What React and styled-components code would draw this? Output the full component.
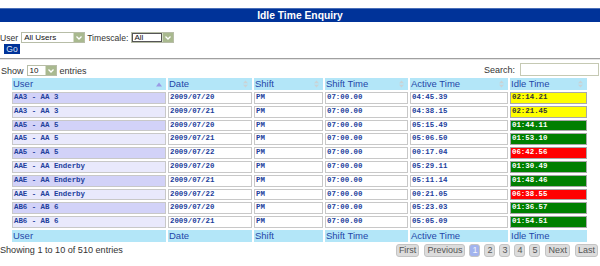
import styled, { createGlobalStyle, css } from "styled-components"

const GlobalStyle = createGlobalStyle`
  html, body { margin: 0; padding: 0; background: #fff; }
  body { font-family: "Liberation Sans", Arial, sans-serif; color: #333; }
`

const rows = [
  ["AA3 - AA 3", "2009/07/20", "PM", "07:00.00", "04:45.39", "02:14.21", "warn"],
  ["AA3 - AA 3", "2009/07/21", "PM", "07:00.00", "04:38.15", "02:21.45", "warn"],
  ["AA5 - AA 5", "2009/07/20", "PM", "07:00.00", "05:15.49", "01:44.11", "ok"],
  ["AA5 - AA 5", "2009/07/21", "PM", "07:00.00", "05:06.50", "01:53.10", "ok"],
  ["AA5 - AA 5", "2009/07/22", "PM", "07:00.00", "00:17.04", "06:42.56", "bad"],
  ["AAE - AA Enderby", "2009/07/20", "PM", "07:00.00", "05:29.11", "01:30.49", "ok"],
  ["AAE - AA Enderby", "2009/07/21", "PM", "07:00.00", "05:11.14", "01:48.46", "ok"],
  ["AAE - AA Enderby", "2009/07/22", "PM", "07:00.00", "00:21.05", "06:38.55", "bad"],
  ["AB6 - AB 6", "2009/07/20", "PM", "07:00.00", "05:23.03", "01:36.57", "ok"],
  ["AB6 - AB 6", "2009/07/21", "PM", "07:00.00", "05:05.09", "01:54.51", "ok"],
]

const columns = [
  { title: "User", width: 154, sort: "asc" },
  { title: "Date", width: 84 },
  { title: "Shift", width: 69 },
  { title: "Shift Time", width: 83 },
  { title: "Active Time", width: 98 },
  { title: "Idle Time", width: 77 },
]

const tones = {
  warn: { bg: "#ffff00", fg: "#333" },
  ok: { bg: "#007f00", fg: "#fff" },
  bad: { bg: "#ff0000", fg: "#fff" },
}

const SelectArrow = () => (
  <svg width="6" height="4" viewBox="0 0 6 4">
    <path d="M0.5 0.5 L3 3 L5.5 0.5" fill="none" stroke="#fff" strokeWidth="1.3" />
  </svg>
)

const SortIcon = ({ dir }) =>
  dir === "asc" ? (
    <svg width="6" height="5" viewBox="0 0 6 5">
      <path d="M0 4.5 L3 0.5 L6 4.5 Z" fill="#9a9ae6" />
    </svg>
  ) : (
    <svg width="5" height="8" viewBox="0 0 5 8">
      <path d="M0 3.2 L2.5 0.5 L5 3.2 Z" fill="#c9d3d6" />
      <path d="M0 4.8 L2.5 7.5 L5 4.8 Z" fill="#c9d3d6" />
    </svg>
  )

const FakeSelect = ({ value, width, height = 11, focused }) => (
  <SelectBox $width={width} $height={height}>
    <SelectValue $focused={focused}>{value}</SelectValue>
    <SelectButton>
      <SelectArrow />
    </SelectButton>
  </SelectBox>
)

export default function App() {
  return (
    <>
      <GlobalStyle />
      <Page>
        <TitleBar>Idle Time Enquiry</TitleBar>

        <FilterForm>
          <FilterRow>
            <Label>User</Label>
            <FakeSelect value="All Users" width={64} />
            <Label>Timescale:</Label>
            <FakeSelect value="All" width={43} focused />
          </FilterRow>
          <GoButton>Go</GoButton>
        </FilterForm>

        <Rule />

        <Controls>
          <LengthControl>
            <SmallText>Show</SmallText>
            <FakeSelect value="10" width={30} height={11} />
            <SmallText>entries</SmallText>
          </LengthControl>
          <SearchControl>
            <SmallText>Search:</SmallText>
            <SearchInput />
          </SearchControl>
        </Controls>

        <Table>
          <colgroup>
            {columns.map((c) => (
              <col key={c.title} style={{ width: c.width }} />
            ))}
          </colgroup>
          <thead>
            <tr>
              {columns.map((c) => (
                <HeadCell key={c.title}>
                  <HeadInner>
                    <span>{c.title}</span>
                    <SortIcon dir={c.sort} />
                  </HeadInner>
                </HeadCell>
              ))}
            </tr>
          </thead>
          <tbody>
            {rows.map((r, i) => (
              <tr key={i}>
                <UserCell $odd={i % 2 === 0}>{r[0]}</UserCell>
                <DataCell>{r[1]}</DataCell>
                <DataCell>{r[2]}</DataCell>
                <DataCell>{r[3]}</DataCell>
                <DataCell>{r[4]}</DataCell>
                <IdleCell $tone={r[6]}>{r[5]}</IdleCell>
              </tr>
            ))}
          </tbody>
          <tfoot>
            <tr>
              {columns.map((c) => (
                <HeadCell key={c.title}>{c.title}</HeadCell>
              ))}
            </tr>
          </tfoot>
        </Table>

        <Footer>
          <InfoText>Showing 1 to 10 of 510 entries</InfoText>
          <Pager>
            <PageButton>First</PageButton>
            <PageButton>Previous</PageButton>
            <PageButton $num $active>1</PageButton>
            <PageButton $num>2</PageButton>
            <PageButton $num>3</PageButton>
            <PageButton $num>4</PageButton>
            <PageButton $num>5</PageButton>
            <PageButton>Next</PageButton>
            <PageButton>Last</PageButton>
          </Pager>
        </Footer>
      </Page>
    </>
  )
}

const Page = styled.div`
  width: 600px;
  padding-top: 9px;
`

const TitleBar = styled.div`
  height: 13px;
  line-height: 13px;
  background: #003399;
  border-top: 1px solid #4a6fb8;
  margin-top: -1px;
  color: #fff;
  font-weight: bold;
  font-size: 10.3px;
  text-align: center;
`

const FilterForm = styled.div`
  padding-top: 10px;
`

const FilterRow = styled.div`
  display: flex;
  align-items: center;
  gap: 2px;
  height: 11px;
`

const Label = styled.span`
  font-size: 8.6px;
  color: #333;
  margin-right: 1px;
`

const SelectBox = styled.div`
  display: flex;
  box-sizing: border-box;
  width: ${(p) => p.$width}px;
  height: ${(p) => p.$height}px;
  border: 1px solid #b7bda7;
  background: #fff;
`

const SelectValue = styled.div`
  flex: 1;
  box-sizing: border-box;
  font-size: 8px;
  line-height: 9px;
  padding-left: 2px;
  color: #111;
  ${(p) =>
    p.$focused &&
    css`
      border: 1px solid #555;
      line-height: 7px;
      padding-left: 1px;
    `}
`

const SelectButton = styled.div`
  width: 10px;
  display: flex;
  align-items: center;
  justify-content: center;
  background: #a9b98f;
  border-left: 1px solid #d5dcc8;
`

const GoButton = styled.div`
  width: 16px;
  height: 10px;
  margin: 1px 0 0 4px;
  background: #003399;
  color: #dfe6f5;
  font-size: 8.5px;
  line-height: 10px;
  text-align: center;
`

const Rule = styled.div`
  margin-top: 4px;
  border-top: 1px solid #a0a0a0;
  border-bottom: 1px solid #e6e6e6;
`

const Controls = styled.div`
  display: flex;
  justify-content: space-between;
  align-items: center;
  height: 13px;
  margin-top: 3px;
  padding-right: 1px;
`

const LengthControl = styled.div`
  display: flex;
  align-items: center;
  gap: 2px;
  margin-top: 2px;
`

const SearchControl = styled.div`
  display: flex;
  align-items: center;
  gap: 4px;
`

const SmallText = styled.span`
  font-size: 9px;
  color: #333;
  margin: 0 1px;
`

const SearchInput = styled.div`
  box-sizing: border-box;
  width: 79px;
  height: 13px;
  border: 1px solid #c5c9b3;
  background: #fff;
`

const Table = styled.table`
  table-layout: fixed;
  width: 579px;
  margin-left: 10px;
  border-collapse: separate;
  border-spacing: 2px;
`

const HeadCell = styled.th`
  box-sizing: border-box;
  height: 12px;
  padding: 0 1px;
  background: #b3e6f8;
  color: #2446a8;
  font-size: 9.5px;
  font-weight: normal;
  text-align: left;
  line-height: 12px;
  white-space: nowrap;
`

const HeadInner = styled.div`
  display: flex;
  justify-content: space-between;
  align-items: center;
  padding-right: 3px;
`

const cellBase = css`
  box-sizing: border-box;
  height: 11.8px;
  padding: 0 1px;
  border: 1px solid #c8c8c8;
  font-family: "Liberation Mono", "Courier New", monospace;
  font-weight: bold;
  font-size: 7.4px;
  line-height: 9.8px;
  white-space: nowrap;
  overflow: hidden;
`

const DataCell = styled.td`
  ${cellBase};
  background: #fff;
  color: #22409c;
`

const UserCell = styled.td`
  ${cellBase};
  background: ${(p) => (p.$odd ? "#d2d2f8" : "#e9e9fc")};
  color: #22409c;
`

const IdleCell = styled.td`
  ${cellBase};
  background: ${(p) => tones[p.$tone].bg};
  color: ${(p) => tones[p.$tone].fg};
  border-color: #a8a8a8;
`

const Footer = styled.div`
  display: flex;
  justify-content: space-between;
  align-items: center;
  padding-right: 2px;
`

const InfoText = styled.span`
  font-size: 9.1px;
  color: #333;
`

const Pager = styled.div`
  display: flex;
  gap: 4px;
`

const PageButton = styled.span`
  box-sizing: border-box;
  height: 13px;
  padding: 0 2px;
  border: 1px solid #c4c4c4;
  border-radius: 3px;
  background: ${(p) => (p.$active ? "#a2b3ee" : "#dcdcdc")};
  color: ${(p) => (p.$active ? "#f2f4fb" : "#555")};
  font-size: 9px;
  line-height: 11px;
  text-align: center;
  min-width: ${(p) => (p.$num ? "11px" : "0")};
  margin-left: ${(p) => (p.$num ? "0" : "1px")};
`
